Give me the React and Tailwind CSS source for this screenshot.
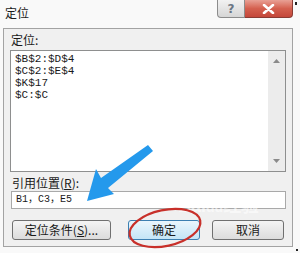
export default function App() {
  const cjk = { fontFamily: '"Noto Sans CJK SC", "Noto Sans", sans-serif' };
  const mono = { fontFamily: '"Liberation Mono", "Noto Sans CJK SC", monospace' };
  return (
    <div className="relative w-[300px] h-[253px] bg-[#f9f9f9] overflow-hidden text-[#1a1a1a]" style={cjk}>
      {/* title row */}
      <div className="flex h-[28px] items-start">
        <div className="pl-[5px] pt-[5px] text-[12px] leading-[16px]">定位</div>
        <div className="ml-auto mr-[7px] flex h-[18px]">
          <div className="w-[28px] h-[18px] border border-[#8c8c8c] border-t-0 rounded-bl-[4px] bg-gradient-to-b from-[#f2f2f2] to-[#d6d6d6] flex items-center justify-center text-[12px] leading-none text-[#6a7684] font-bold" style={{ fontFamily: '"DejaVu Sans", sans-serif' }}>?</div>
          <div className="w-[48px] h-[18px] border border-[#8a3b33] border-t-0 border-l-0 rounded-br-[4px] bg-gradient-to-b from-[#e8a095] via-[#d4604f] to-[#c4473a] flex items-center justify-center">
            <svg width="13" height="10" viewBox="0 0 13 10">
              <path d="M2 1 L11 9 M11 1 L2 9" stroke="#ffffff" strokeWidth="2.6" strokeLinecap="round" />
            </svg>
          </div>
        </div>
      </div>

      {/* group box */}
      <div className="ml-[3px] w-[290px] h-[219px] border border-[#a3a3a3] bg-[#f0f0f0] flex flex-col px-[6px]">
        <div className="pl-[1px] pt-[4px] text-[12px] leading-[14px] h-[21px]">定位:</div>
        <div className="w-[276px] h-[122px] border border-[#8e8f8f] bg-white flex">
          <div className="flex-1 pl-[4px] pt-[2px] text-[11px] leading-[12px]" style={mono}>
            <div>$B$2:$D$4</div>
            <div>$C$2:$E$4</div>
            <div>$K$17</div>
            <div>$C:$C</div>
          </div>
          <div className="w-[17px] bg-[#ececec] flex flex-col items-center justify-between py-[8px]">
            <svg width="7" height="4" viewBox="0 0 7 4"><path d="M0 4 L3.5 0 L7 4 Z" fill="#8a8a8a" /></svg>
            <svg width="7" height="4" viewBox="0 0 7 4"><path d="M0 0 L3.5 4 L7 0 Z" fill="#8a8a8a" /></svg>
          </div>
        </div>
        <div className="pl-[2px] pt-[4px] h-[19px] text-[12px] leading-[14px]">引用位置(<span className="underline">R</span>):</div>
        <div className="ml-[1px] w-[275px] h-[18px] border border-[#a9a9a9] bg-white pl-[4px] text-[10px] leading-[16px]" style={mono}>B1，C3，E5</div>
        <div className="flex mt-[11px] h-[20px] text-[12px]">
          <div className="ml-[2px] w-[99px] h-[20px] border border-[#707070] rounded-[3px] bg-gradient-to-b from-[#f4f4f4] to-[#dcdcdc] flex items-center justify-center leading-none">定位条件(<span className="underline">S</span>)...</div>
          <div className="ml-[17px] w-[72px] h-[20px] border border-[#3c7fb1] rounded-[3px] bg-gradient-to-b from-[#eaf6fd] to-[#c4e5f6] flex items-center justify-center leading-none">确定</div>
          <div className="ml-[12px] w-[72px] h-[20px] border border-[#707070] rounded-[3px] bg-gradient-to-b from-[#f4f4f4] to-[#dcdcdc] flex items-center justify-center leading-none">取消</div>
        </div>
      </div>

      {/* watermark */}
      <div className="absolute left-[178px] top-[197px] text-[18px] font-bold text-white/60 leading-none" style={{ fontFamily: '"Liberation Sans", "Noto Sans CJK SC", sans-serif' }}>Bai<span className="text-[14px]">du</span>经验</div>

      {/* blue arrow */}
      <svg className="absolute left-0 top-0" width="300" height="253" viewBox="0 0 300 253">
        <polygon points="87,201 96,169 101,178 148,145 153,151 108,188 114,194" fill="#2499ec" />
        <ellipse cx="165" cy="228" rx="36" ry="18" transform="rotate(-12 165 228)" fill="none" stroke="#c8302a" strokeWidth="2.2" />
        <rect x="295" y="2" width="2" height="3" fill="#222" />
        <rect x="296" y="249" width="2" height="2" fill="#222" />
      </svg>
    </div>
  );
}
